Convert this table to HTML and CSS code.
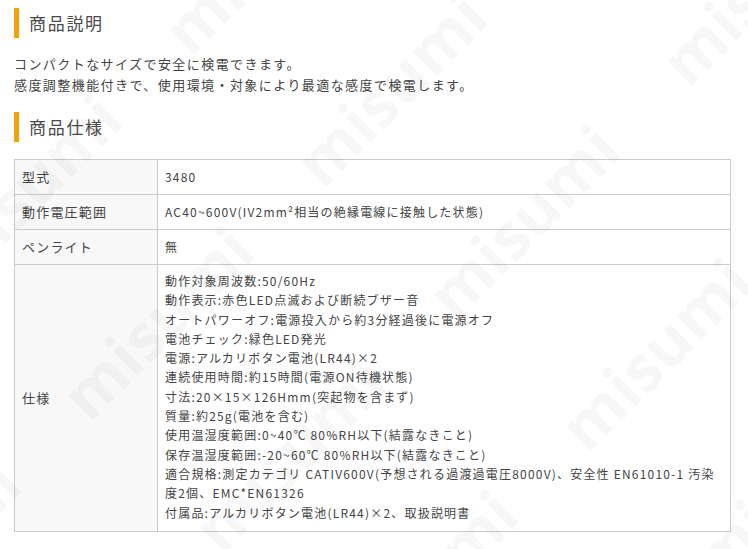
FILE: index.html
```html
<!DOCTYPE html>
<html lang="ja">
<head>
    <meta charset="UTF-8">
    <title>商品説明</title>
    <link rel="stylesheet" href="styles.css">
</head>
<body>
    <div class="page">
        <h2 class="section-title">商品説明</h2>
        <p class="description">
            コンパクトなサイズで安全に検電できます。<br>
            感度調整機能付きで、使用環境・対象により最適な感度で検電します。
        </p>

        <h2 class="section-title">商品仕様</h2>
        <table class="spec-table">
            <tr>
                <th>型式</th>
                <td>3480</td>
            </tr>
            <tr>
                <th>動作電圧範囲</th>
                <td>AC40~600V(IV2mm²相当の絶縁電線に接触した状態)</td>
            </tr>
            <tr>
                <th>ペンライト</th>
                <td>無</td>
            </tr>
            <tr>
                <th>仕様</th>
                <td class="multi">
                    動作対象周波数:50/60Hz<br>
                    動作表示:赤色LED点滅および断続ブザー音<br>
                    オートパワーオフ:電源投入から約3分経過後に電源オフ<br>
                    電池チェック:緑色LED発光<br>
                    電源:アルカリボタン電池(LR44)×2<br>
                    連続使用時間:約15時間(電源ON待機状態)<br>
                    寸法:20×15×126Hmm(突起物を含まず)<br>
                    質量:約25g(電池を含む)<br>
                    使用温湿度範囲:0~40℃ 80%RH以下(結露なきこと)<br>
                    保存温湿度範囲:-20~60℃ 80%RH以下(結露なきこと)<br>
                    適合規格:測定カテゴリ CATIV600V(予想される過渡過電圧8000V)、安全性 EN61010-1 汚染度2個、EMC*EN61326<br>
                    付属品:アルカリボタン電池(LR44)×2、取扱説明書
                </td>
            </tr>
        </table>
    </div>

    <div class="watermark-layer" aria-hidden="true">
        <div class="watermark">
            <span>misumi</span><span>misumi</span><span>misumi</span><span>misumi</span>
            <span>misumi</span><span>misumi</span><span>misumi</span><span>misumi</span>
            <span>misumi</span><span>misumi</span><span>misumi</span><span>misumi</span>
            <span>misumi</span><span>misumi</span><span>misumi</span><span>misumi</span>
            <span>misumi</span><span>misumi</span><span>misumi</span><span>misumi</span>
            <span>misumi</span><span>misumi</span><span>misumi</span><span>misumi</span>
        </div>
    </div>
</body>
</html>
```

FILE: styles.css
```css
body {
    margin: 0;
    padding: 0;
    background: #fff;
    color: #444;
    font-family: "Noto Sans CJK JP", "Noto Sans", sans-serif;
}
.page {
    padding: 8px 17px 0 14px;
}
.section-title {
    margin: 0;
    border-left: 5px solid #f0a30a;
    padding-left: 10px;
    height: 30px;
    line-height: 30px;
    font-size: 17px;
    font-weight: normal;
    letter-spacing: 0.1em;
    color: #4a4a4a;
}
.description {
    margin: 15px 0 17px;
    font-size: 13px;
    line-height: 21px;
    letter-spacing: 0.11em;
}
.spec-table {
    margin-top: 17px;
    width: 100%;
    border-collapse: collapse;
    font-size: 12px;
    letter-spacing: 0.1em;
}
.spec-table th,
.spec-table td {
    border: 1px solid #ccc;
    padding: 8px 10px 8px 7px;
    height: 18px;
    line-height: 18px;
    text-align: left;
    font-weight: normal;
}
.spec-table th {
    width: 125px;
    background: #f8f8f8;
    font-size: 13px;
}
.spec-table td.multi {
    line-height: 19.3px;
    padding-top: 6px;
    padding-bottom: 9px;
}
.watermark-layer {
    position: fixed;
    top: 0;
    left: 0;
    right: 0;
    bottom: 0;
    overflow: hidden;
    pointer-events: none;
}
.watermark {
    position: absolute;
    top: -300px;
    left: -300px;
    width: 1400px;
    display: grid;
    grid-template-columns: repeat(4, 330px);
    row-gap: 100px;
    transform: rotate(-45deg);
    font-family: "Open Sans", sans-serif;
    font-weight: bold;
    font-size: 64px;
    color: rgba(0, 0, 0, 0.03);
}
```
